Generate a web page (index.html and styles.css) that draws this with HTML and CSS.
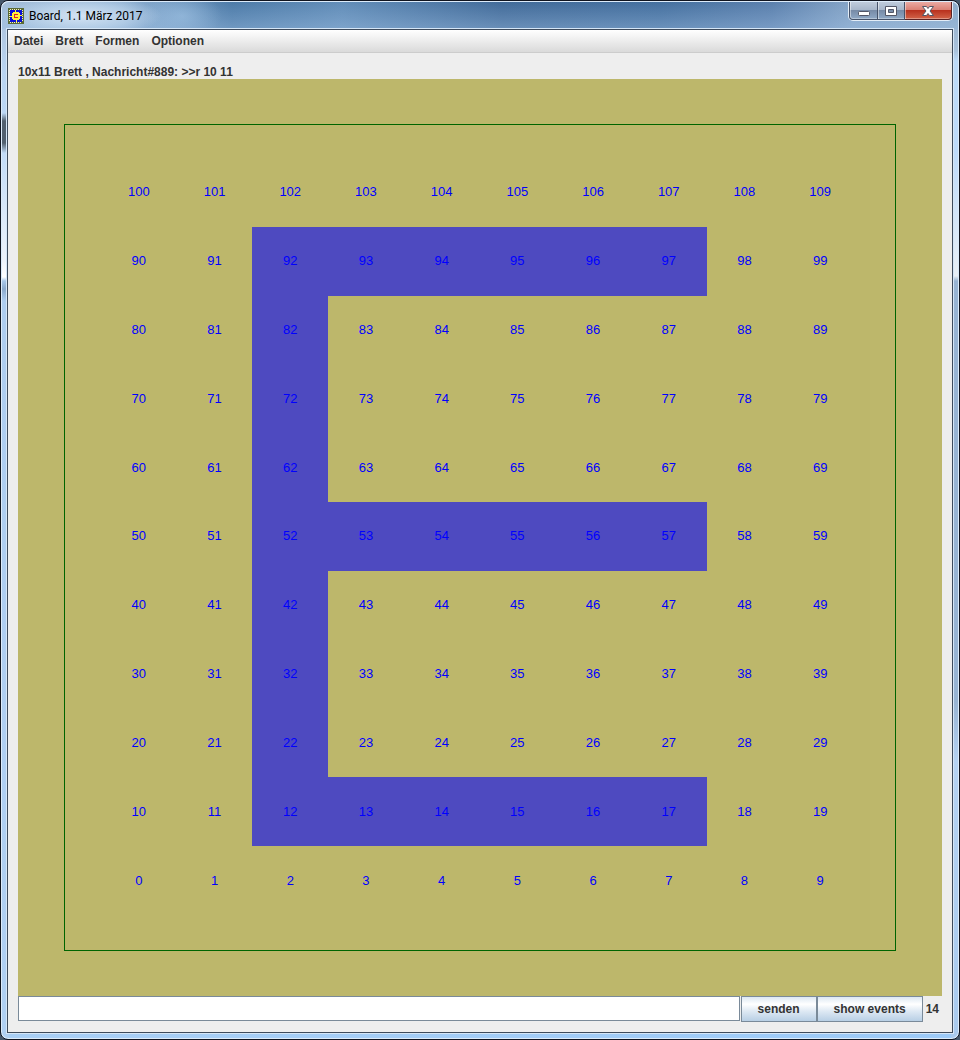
FILE: index.html
```html
<!DOCTYPE html>
<html lang="de">
<head>
<meta charset="utf-8">
<title>Board, 1.1 März 2017</title>
<link rel="stylesheet" href="styles.css">
</head>
<body>
<div class="window">
  <header class="titlebar">
    <svg class="app-icon" viewBox="0 0 16 16" shape-rendering="crispEdges" aria-hidden="true">
      <rect width="16" height="16" fill="#5c6b35"/>
      <path d="M2 1.500h12M2 14.500h12M1.500 2v12M14.500 2v12" fill="none" stroke="#f4f2c0" stroke-dasharray="1 1"/>
      <rect x="2" y="2" width="12" height="12" fill="#0a10d8"/>
      <path d="M5 4h6v1h1v6h-1v1h-6v-1h-1v-6h1zM7 2h1v2h-1zM8 12h1v2h-1zM2 8h2v1h-2zM12 7h2v1h-2z" fill="#fff23a"/>
      <path d="M6 6h4v1h-3v2h3v1h-4z" fill="#e0202c"/>
    </svg>
    <h1 class="title">Board, 1.1 März 2017</h1>
    <div class="controls">
      <button class="control minimize" type="button" aria-label="Minimieren">
        <svg width="14" height="14" viewBox="0 0 14 14" aria-hidden="true"><rect x="1.5" y="7.5" width="11" height="4" rx="1" fill="#fff" stroke="#535666"/></svg>
      </button>
      <button class="control maximize" type="button" aria-label="Maximieren">
        <svg width="14" height="14" viewBox="0 0 14 14" aria-hidden="true"><path fill-rule="evenodd" d="M1.5 2.500h11v9h-11zM4.500 5.500v3h5v-3z" fill="#fff" stroke="#535666"/></svg>
      </button>
      <button class="control close" type="button" aria-label="Schließen">
        <svg width="14" height="14" viewBox="0 0 14 14" aria-hidden="true"><path d="M1.500 2.500h4l1.500 2 1.500-2h4l-3.500 4.500 3.500 4.500h-4l-1.500-2-1.500 2h-4l3.500-4.500z" fill="#fff" stroke="#535666"/></svg>
      </button>
    </div>
  </header>
  <div class="client">
    <nav class="menubar">
      <button class="menu" type="button">Datei</button>
      <button class="menu" type="button">Brett</button>
      <button class="menu" type="button">Formen</button>
      <button class="menu" type="button">Optionen</button>
    </nav>
    <main class="content">
      <p class="status">10x11 Brett , Nachricht#889: &gt;&gt;r 10 11</p>
      <div class="board">
        <div class="grid" id="grid"></div>
      </div>
      <form class="command">
        <input class="message" type="text" aria-label="Nachricht">
        <button class="action" type="button">senden</button>
        <button class="action" type="button">show events</button>
        <output class="count">14</output>
      </form>
    </main>
  </div>
</div>
<script src="board.js"></script>
</body>
</html>
```
FILE: styles.css
```css
* {
  box-sizing: border-box;
}

body {
  margin: 0;
  background: #46586c;
  font-family: "Liberation Sans", Arial, sans-serif;
  font-size: 12px;
  color: #333;
}

.window {
  display: flex;
  flex-direction: column;
  min-height: 100vh;
  padding: 0 6px 5px;
  border: 1px solid #10141f;
  border-radius: 8px;
  box-shadow: inset 0 0 0 1px #dcebfa;
  background:
    linear-gradient(#a9bdd6 0, #b9d4f2 70px, #bcd7f5 112px, #52606f 120px, #52606f 142px, #c2dbf7 152px, #edf3fb 260px, #fff 276px, #a9c8ea 280px, #8ba9cc 288px, #aecdf0 300px, #b0d0f3) left / 8px 100% no-repeat,
    linear-gradient(#8fabc9 0, #a9c2dc 50px, #bcdaf8 60px, #bddafa 150px, #e8eff6 275px, #98b4d3 280px, #98b4d3 700px, #b5d2f2 760px, #a9caee) right / 8px 100% no-repeat,
    linear-gradient(90deg, #a9cff5, #9ccaf8);
}

.titlebar {
  display: flex;
  align-items: center;
  gap: 5px;
  height: 28px;
  margin: 0 -5px;
  padding-left: 6px;
  background:
    radial-gradient(ellipse 80px 20px at 80px 14px, #e2eefacc, #c3d9ee99 60%, transparent),
    radial-gradient(ellipse 40px 24px at 180px 14px, #9fc3e499, transparent),
    linear-gradient(transparent, #a5c5e866),
    linear-gradient(90deg, #a5bfda 0, #8fb0d2 120px, #4d7ba8 230px, #628db8 340px, #426b99 500px, #45709f 660px, #5b80ad 770px, #86a5c7 850px, #8dacca);
  border-top: 1px solid #dcebfa;
  border-radius: 7px 7px 0 0;
}

.app-icon {
  width: 16px;
  height: 16px;
}

.title {
  flex: 1;
  margin: 0;
  font: 12px/16px Roboto, "Noto Sans", sans-serif;
  color: #000;
}

.controls {
  display: flex;
  align-self: flex-start;
  margin-right: 5px;
  border: 1px solid #e3edf7;
  border-top: 0;
  border-radius: 0 0 5px 5px;
}

.control {
  display: flex;
  align-items: center;
  justify-content: center;
  width: 27px;
  height: 18px;
  padding: 0;
  border: 1px solid #46536a;
  border-width: 0 1px 1px 0;
  background: linear-gradient(#bfcbdb, #a6b5c9 48%, #778ba7 50%, #8fa8c5);
  box-shadow: inset 1px 0 #ffffff77, inset 0 -1px #ffffff55;
}

.minimize {
  width: 29px;
  border-left-width: 1px;
  border-radius: 0 0 0 4px;
}

.close {
  width: 47px;
  border-color: #5d2323;
  border-radius: 0 0 4px 0;
  background: linear-gradient(#eaaaa3, #d97e72 48%, #b9321f 50%, #d26449);
}

.client {
  display: flex;
  flex: 1;
  flex-direction: column;
  margin: 0 0 1px;
  border: 1px solid #3e4b5c;
  outline: 1px solid #d5e6f7;
  background: #eee;
}

.menubar {
  display: flex;
  gap: 12px;
  height: 23px;
  padding: 0 6px 1px;
  border-bottom: 1px solid #ccc;
  background: linear-gradient(#fff, #dadada);
}

.menu {
  padding: 0;
  border: 0;
  background: none;
  font: bold 12px "Liberation Sans", Arial, sans-serif;
  color: #333;
}

.content {
  display: flex;
  flex: 1;
  flex-direction: column;
  padding: 12px 10px 10px;
}

.status {
  margin: 0;
  font-weight: bold;
  line-height: 14px;
}

.board {
  display: flex;
  flex: 1;
  padding: 45px 46px;
  background: #bdb76b;
}

.grid {
  display: grid;
  flex: 1;
  grid-template-columns: repeat(10, 1fr);
  grid-template-rows: repeat(11, 1fr);
  padding: 33px 37px 35px 36px;
  border: 1px solid #006400;
}

.cell {
  display: flex;
  align-items: center;
  justify-content: center;
  font-size: 13px;
  line-height: 16px;
  color: #00f;
}

.filled {
  background: #4e4ac0;
}

.command {
  display: flex;
  height: 26px;
}

.message {
  flex: 1;
  min-width: 0;
  height: 25px;
  margin-right: 1px;
  padding: 0 4px;
  border: 1px solid #7a8a99;
  font: 12px "Liberation Sans", Arial, sans-serif;
}

.action {
  padding: 0 16px;
  border: 1px solid #7a8a99;
  background: linear-gradient(#dde8f3, #fff 30%, #dde8f3 60%, #b8cfe5);
  font: bold 12px "Liberation Sans", Arial, sans-serif;
  color: #333;
}

.count {
  padding: 0 3px;
  font-weight: bold;
  line-height: 26px;
}
```
FILE: board.js
```js
const columns = 10;
const rows = 11;
const bars = [1, 5, 9];
const grid = document.getElementById("grid");

for (let row = rows - 1; row >= 0; row--) {
  for (let column = 0; column < columns; column++) {
    const cell = document.createElement("div");
    const stem = column === 2 && row >= 1 && row <= 9;
    const bar = bars.includes(row) && column >= 2 && column <= 7;
    cell.className = stem || bar ? "cell filled" : "cell";
    cell.textContent = row * columns + column;
    grid.append(cell);
  }
}
```
